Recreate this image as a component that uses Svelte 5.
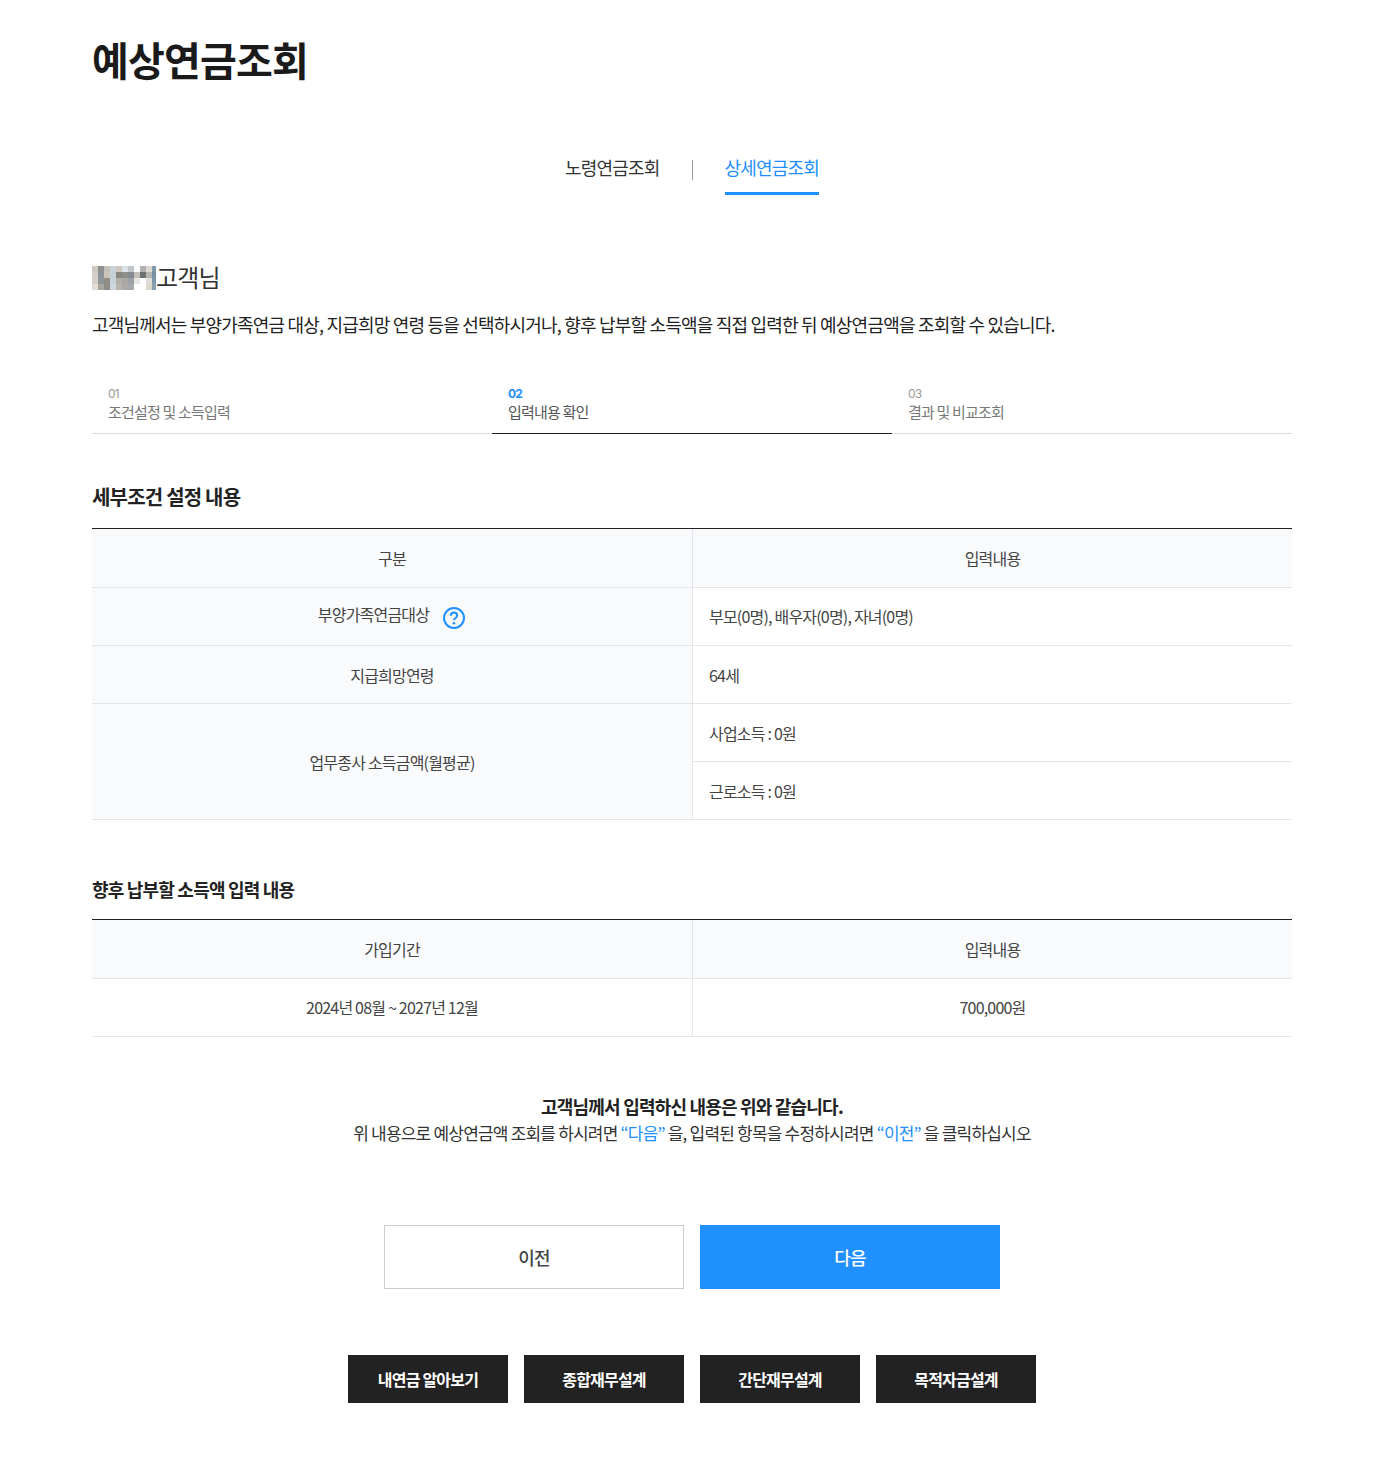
<script>
  const mosaic = [
    '#cfc9c2','#8f8f8f','#c5c0b8','#c8d3da','#cfc6bc','#dbe3ea','#c3c6c9','#ffffff','#b0b0b2','#dcd8cf','#7f99ad',
    '#d5cdc5','#8d9298','#cdc4b8','#c5d0d6','#8a8782','#8d8e8e','#858a90','#c4c0ba','#6f7072','#b6b4b2','#7a92a5',
    '#d8cfc8','#8f9498','#8e8c84','#c8d3d9','#b4aea8','#aaa8a6','#9ea2a8','#e8e4e0','#ffffff','#e0dcd8','#7e98ab',
    '#e5ddd5','#a8a49e','#908c84','#cdd6dc','#bab4ae','#aeaaa8','#a4a8ac','#ffffff','#ffffff','#ddd8cc','#8aa0b0'
  ];
  const steps = [
    { n: '01', t: '조건설정 및 소득입력' },
    { n: '02', t: '입력내용 확인', on: true },
    { n: '03', t: '결과 및 비교조회' }
  ];
  const links = ['내연금 알아보기', '종합재무설계', '간단재무설계', '목적자금설계'];
</script>

<main class="page">
  <h1>예상연금조회</h1>

  <nav class="tabs">
    <a class="tab">노령연금조회</a>
    <span class="sep"></span>
    <a class="tab active">상세연금조회</a>
  </nav>

  <div class="name">
    <span class="mosaic">{#each mosaic as c}<i style="background:{c}"></i>{/each}</span>고객님
  </div>
  <p class="lead">고객님께서는 부양가족연금 대상, 지급희망 연령 등을 선택하시거나, 향후 납부할 소득액을 직접 입력한 뒤 예상연금액을 조회할 수 있습니다.</p>

  <ol class="steps">
    {#each steps as s}
      <li class:on={s.on}><b>{s.n}</b><span>{s.t}</span></li>
    {/each}
  </ol>

  <h2>세부조건 설정 내용</h2>
  <table>
    <tbody>
      <tr><th class="bg c">구분</th><th class="bg c r">입력내용</th></tr>
      <tr>
        <td class="bg c">
          <span class="withicon"><span class="label">부양가족연금대상</span>
            <svg width="24" height="24" viewBox="0 0 24 24" aria-hidden="true">
              <circle cx="12" cy="12" r="10" fill="none" stroke="#2090ff" stroke-width="2"/>
              <path d="M8.9 9.7a3.1 3.1 0 0 1 6.2 0c0 2.2-3.1 2.3-3.1 4.5" fill="none" stroke="#2090ff" stroke-width="2"/>
              <circle cx="12" cy="17.2" r="1.3" fill="#2090ff"/>
            </svg>
          </span>
        </td>
        <td class="r up">부모(0명), 배우자(0명), 자녀(0명)</td>
      </tr>
      <tr><td class="bg c">지급희망연령</td><td class="r">64세</td></tr>
      <tr><td class="bg c" rowspan="2">업무종사 소득금액(월평균)</td><td class="r">사업소득 : 0원</td></tr>
      <tr><td class="r">근로소득 : 0원</td></tr>
    </tbody>
  </table>

  <h3>향후 납부할 소득액 입력 내용</h3>
  <table>
    <tbody>
      <tr><th class="bg c">가입기간</th><th class="bg c r">입력내용</th></tr>
      <tr><td class="c up">2024년 08월 ~ 2027년 12월</td><td class="c r up">700,000원</td></tr>
    </tbody>
  </table>

  <div class="notice">
    <strong>고객님께서 입력하신 내용은 위와 같습니다.</strong>
    <p>위 내용으로 예상연금액 조회를 하시려면 <em>“다음”</em> 을, 입력된 항목을 수정하시려면 <em>“이전”</em> 을 클릭하십시오</p>
  </div>

  <div class="actions">
    <button class="prev">이전</button>
    <button class="next">다음</button>
  </div>

  <div class="links">
    {#each links as l}<button>{l}</button>{/each}
  </div>
</main>

<style>
  :global(body) { margin: 0; background: #fff; }
  .page {
    width: 1200px;
    margin: 0 auto;
    height: 1468px;
    font-family: "Noto Sans CJK KR", "Noto Sans", sans-serif;
    color: #333;
    letter-spacing: -0.05em;
    box-sizing: border-box;
    padding-top: 29px;
  }
  h1 { margin: 0; font-size: 40px; line-height: 60px; font-weight: 700; color: #1a1a1a; }
  .tabs { display: flex; justify-content: center; align-items: flex-start; gap: 32px; margin-top: 61px; height: 49px; }
  .tab { font-size: 18px; line-height: 34px; height: 45px; box-sizing: border-box; color: #333; }
  .tab.active { color: #2090ff; border-bottom: 3px solid #2090ff; }
  .sep { width: 1px; height: 20px; background: #999; margin-top: 10px; }
  .name { margin-top: 60px; display: flex; align-items: center; font-size: 24px; line-height: 36px; color: #333; }
  .mosaic { display: grid; grid-template-columns: repeat(10, 6px) 4px; grid-auto-rows: 6px; width: 64px; margin-top: 2px; }
  .mosaic i { display: block; }
  .lead { margin: 14px 0 0; font-size: 18px; line-height: 30px; color: #222; }
  .steps { list-style: none; margin: 45px 0 0; padding: 0; display: grid; grid-template-columns: repeat(3, 1fr); }
  .steps li { padding: 0 16px 4px; border-bottom: 1px solid #ddd; height: 50px; box-sizing: border-box; display: flex; flex-direction: column; color: #777; }
  .steps b { font-family: Inter, "Noto Sans", sans-serif; font-size: 12px; line-height: 16px; margin-top: 2px; font-weight: 400; color: #999; }
  .steps span { font-size: 15px; line-height: 20px; }
  .steps li.on { border-bottom-color: #222; color: #555; }
  .steps li.on b { color: #2090ff; font-weight: 700; }
  h2 { margin: 45px 0 0; font-size: 20px; line-height: 36px; font-weight: 700; color: #222; }
  h3 { margin: 51px 0 0; font-size: 18px; line-height: 36px; font-weight: 700; color: #222; }
  table { width: 100%; border-collapse: separate; border-spacing: 0; table-layout: fixed; border-top: 1px solid #222; margin-top: 13px; }
  h3 + table { margin-top: 12px; }
  th, td { height: 58px; box-sizing: border-box; border-bottom: 1px solid #e4e5e8; font-size: 16px; font-weight: 400; padding: 0 16px; color: #444; text-align: left; }
  th { height: 59px; }
  td.up { padding-bottom: 2px; }
  .r { border-left: 1px solid #e4e5e8; }
  th.c { text-align: center; }
  td.c { text-align: center; }
  .bg { background: #f9fafc; }
  .withicon { display: inline-flex; align-items: center; gap: 13px; }
  .label { margin-bottom: 6px; }
  .withicon svg { margin-top: 2px; }
  .notice { margin-top: 56px; text-align: center; font-size: 17px; line-height: 26px; color: #333; }
  .notice strong { display: block; font-size: 18px; line-height: 27px; font-weight: 700; color: #222; }
  .notice p { margin: 0; }
  .notice em { font-style: normal; color: #2090ff; }
  .actions { display: flex; justify-content: center; gap: 16px; margin-top: 79px; }
  .actions button { width: 300px; height: 64px; font: inherit; font-size: 18px; font-weight: 500; letter-spacing: inherit; }
  .prev { background: #fff; border: 1px solid #ccc; color: #444; }
  .next { background: #2090ff; border: 0; color: #fff; }
  .links { display: flex; justify-content: center; gap: 16px; margin-top: 66px; }
  .links button { width: 160px; height: 48px; background: #222; border: 0; color: #fff; font: inherit; font-size: 16px; font-weight: 700; letter-spacing: inherit; }
</style>
